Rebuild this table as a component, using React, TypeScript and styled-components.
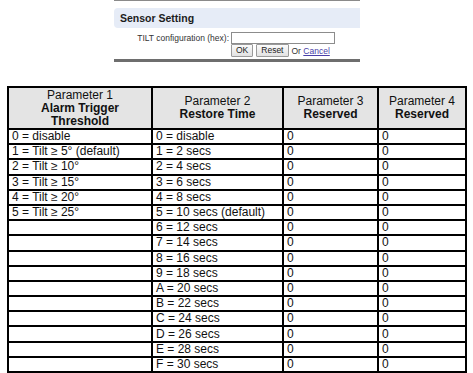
import React from 'react';
import styled, { createGlobalStyle } from 'styled-components';

const GlobalStyle = createGlobalStyle`
  html, body {
    margin: 0;
    padding: 0;
    background: #ffffff;
  }

  body {
    font-family: 'Liberation Sans', Arial, sans-serif;
    color: #000000;
  }
`;

const Page = styled.div`
  display: flex;
  flex-direction: column;
  align-items: center;
  padding: 0 7px 0 8px;
`;

const Panel = styled.div`
  width: 246px;
  border-top: 1px solid #8a8a8a;
  border-bottom: 3px solid #6e6e6e;
  padding: 7px 0 2px;
  display: flex;
  flex-direction: column;
  gap: 4px;
`;

const PanelHeader = styled.div`
  background: #e6ecf7;
  border-radius: 4px 0 0 4px;
  height: 20px;
  display: flex;
  align-items: center;
  padding-left: 6px;
  font-size: 10.5px;
  font-weight: bold;
  color: #1c1c1c;
`;

const FormGrid = styled.div`
  display: grid;
  grid-template-columns: 115px 104px;
  column-gap: 2px;
  row-gap: 0;
  font-size: 8.5px;
  color: #333333;
`;

const FieldLabel = styled.label`
  justify-self: end;
  align-self: center;
`;

const HexInput = styled.input`
  box-sizing: border-box;
  width: 104px;
  height: 12px;
  margin: 0;
  padding: 0;
  border: 1px solid #8c8c8c;
`;

const Actions = styled.div`
  grid-column: 2;
  display: flex;
  align-items: center;
  gap: 3px;
`;

const SmallButton = styled.button`
  font-family: inherit;
  font-size: 8.5px;
  color: #222222;
  height: 13px;
  padding: 0 4px;
  border: 1px solid #9a9a9a;
  border-radius: 1px;
  background: linear-gradient(#fbfbfb, #e2e2e2);
  line-height: 11px;
`;

const CancelLink = styled.a`
  color: #4a3fa8;
  text-decoration: underline;
`;

const ParamTable = styled.table`
  margin-top: 24px;
  width: 458px;
  border-collapse: collapse;
  border: 2px solid #000000;
  font-size: 12px;
  color: #111111;
  table-layout: fixed;
`;

const Column = styled.col<{ $width: number }>`
  width: ${ ({ $width }) => $width }px;
`;

const HeadCell = styled.th`
  height: 40px;
  background: #e4e4e4;
  border: 2px solid #000000;
  font-weight: normal;
  line-height: 13px;
  text-align: center;
  vertical-align: middle;
  padding: 0 2px;

  > b {
    display: block;
    font-weight: bold;
  }
`;

const Cell = styled.td`
  height: 13.2px;
  border: 2px solid #000000;
  padding: 0 3px;
  line-height: 13px;
  white-space: nowrap;
  overflow: hidden;
`;

const columns = [
  { width: 144, top: 'Parameter 1', title: 'Alarm Trigger Threshold' },
  { width: 131, top: 'Parameter 2', title: 'Restore Time' },
  { width: 95, top: 'Parameter 3', title: 'Reserved' },
  { width: 88, top: 'Parameter 4', title: 'Reserved' },
];

const thresholds = [
  '0 = disable',
  '1 = Tilt ≥ 5° (default)',
  '2 = Tilt ≥ 10°',
  '3 = Tilt ≥ 15°',
  '4 = Tilt ≥ 20°',
  '5 = Tilt ≥ 25°',
];

const restoreTimes = [
  '0 = disable',
  '1 = 2 secs',
  '2 = 4 secs',
  '3 = 6 secs',
  '4 = 8 secs',
  '5 = 10 secs (default)',
  '6 = 12 secs',
  '7 = 14 secs',
  '8 = 16 secs',
  '9 = 18 secs',
  'A = 20 secs',
  'B = 22 secs',
  'C = 24 secs',
  'D = 26 secs',
  'E = 28 secs',
  'F = 30 secs',
];

const App = () => (
  <>
    <GlobalStyle />
    <Page>
      <Panel>
        <PanelHeader>Sensor Setting</PanelHeader>
        <FormGrid>
          <FieldLabel htmlFor='tilt-hex'>TILT configuration (hex):</FieldLabel>
          <HexInput id='tilt-hex' type='text' />
          <Actions>
            <SmallButton type='button'>OK</SmallButton>
            <SmallButton type='button'>Reset</SmallButton>
            <span>Or <CancelLink href='#'>Cancel</CancelLink></span>
          </Actions>
        </FormGrid>
      </Panel>
      <ParamTable>
        <colgroup>
          {columns.map((col) => <Column key={col.top} $width={col.width} />)}
        </colgroup>
        <thead>
          <tr>
            {columns.map((col) => (
              <HeadCell key={col.top}>
                {col.top}
                <b>{col.title}</b>
              </HeadCell>
            ))}
          </tr>
        </thead>
        <tbody>
          {restoreTimes.map((time, i) => (
            <tr key={time}>
              <Cell>{thresholds[i] ?? ''}</Cell>
              <Cell>{time}</Cell>
              <Cell>0</Cell>
              <Cell>0</Cell>
            </tr>
          ))}
        </tbody>
      </ParamTable>
    </Page>
  </>
);

export default App;
